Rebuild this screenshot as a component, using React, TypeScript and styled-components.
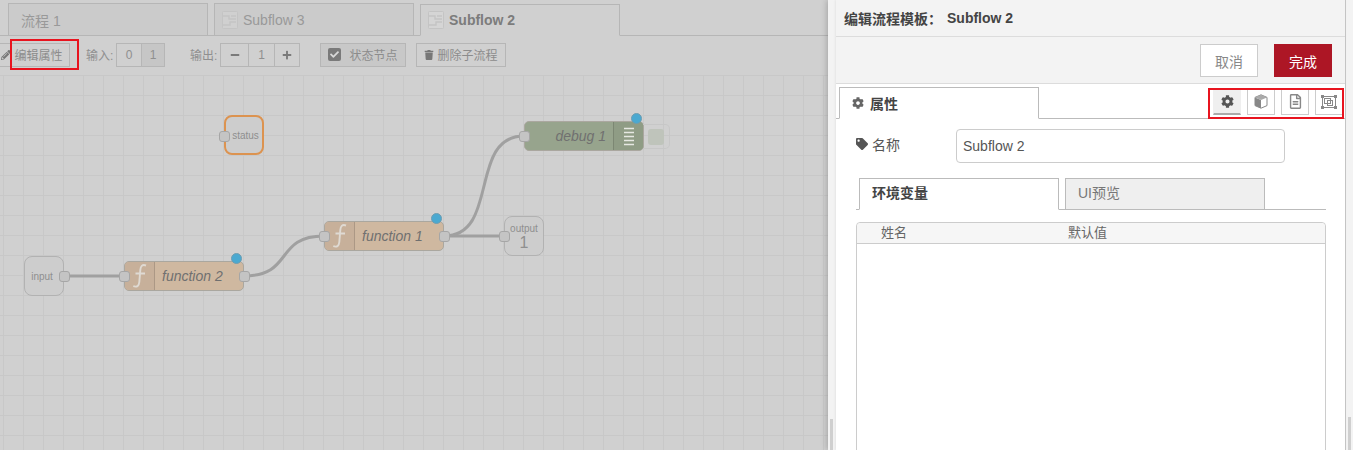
import styled, { createGlobalStyle } from "styled-components";
import { FaCog, FaMinus, FaPencilAlt, FaPlus, FaRegFileAlt, FaTag, FaTrash, FaCheck } from "react-icons/fa";

const FONT = `"Liberation Sans", "Noto Sans CJK SC", sans-serif`;

const GlobalStyle = createGlobalStyle`
  html, body {
    margin: 0;
    height: 450px;
    overflow: hidden;
    font-family: ${FONT};
  }
  * {
    box-sizing: border-box;
  }
`;

const Page = styled.div`
  display: flex;
  width: 1353px;
  height: 450px;
  overflow: hidden;
  position: relative;
`;

const Workspace = styled.div`
  width: 828px;
  flex: none;
  display: flex;
  flex-direction: column;
  background: #d0d0d0;
`;

const TabBar = styled.div`
  height: 36px;
  flex: none;
  display: flex;
  align-items: flex-end;
  gap: 6px;
  padding-left: 8px;
  border-bottom: 1px solid #b6b6b6;
`;

const Tab = styled.div<{ $active?: boolean }>`
  width: 200px;
  height: 32px;
  margin-bottom: ${(p) => (p.$active ? "-1px" : "0")};
  padding-left: 7px;
  display: flex;
  align-items: center;
  gap: 5px;
  font-size: 14px;
  font-weight: ${(p) => (p.$active ? 700 : 400)};
  color: ${(p) => (p.$active ? "#7c7c7c" : "#999")};
  background: ${(p) => (p.$active ? "#d0d0d0" : "#cbcbcb")};
  border: 1px solid #b6b6b6;
  border-bottom: ${(p) => (p.$active ? "1px solid #d0d0d0" : "none")};
`;

const TabName = styled.span<{ $plain?: boolean }>`
  margin-left: ${(p) => (p.$plain ? "5px" : "0")};
`;

const Toolbar = styled.div`
  height: 39px;
  flex: none;
  display: flex;
  align-items: center;
  padding-bottom: 2px;
  font-size: 12px;
  color: #8f8f8f;
`;

const ToolButton = styled.div<{ $ml: number; $width: number; $on?: boolean }>`
  margin-left: ${(p) => p.$ml}px;
  width: ${(p) => p.$width}px;
  height: 24px;
  flex: none;
  display: flex;
  align-items: center;
  justify-content: center;
  gap: 3px;
  border: 1px solid #b6b6b6;
  background: ${(p) => (p.$on ? "#c8c8c8" : "transparent")};
  color: #8c8c8c;
  font-size: 12px;
  white-space: nowrap;
`;

const ToolLabel = styled.span<{ $ml: number }>`
  margin-left: ${(p) => p.$ml}px;
  width: 30px;
  flex: none;
  white-space: nowrap;
`;

const Group = styled.div`
  display: flex;
  height: 24px;
  flex: none;
  border: 1px solid #b6b6b6;
`;

const GroupCell = styled.div<{ $w: number; $on?: boolean }>`
  width: ${(p) => p.$w}px;
  display: flex;
  align-items: center;
  justify-content: center;
  font-size: 12px;
  color: #8f8f8f;
  background: ${(p) => (p.$on ? "#c6c6c6" : "transparent")};
  & + & {
    border-left: 1px solid #b6b6b6;
  }
`;

const CheckMark = styled.span`
  width: 13px;
  height: 13px;
  margin-right: 5px;
  border-radius: 2px;
  background: #7a7a7a;
  color: #d8d8d8;
  display: flex;
  align-items: center;
  justify-content: center;
  font-size: 9px;
`;

const Canvas = styled.div`
  flex: 1;
  position: relative;
  background-color: #d0d0d0;
  background-image: linear-gradient(#c8c8c8 1px, transparent 1px),
    linear-gradient(90deg, #c8c8c8 1px, transparent 1px);
  background-size: 20px 20px;
  background-position: 3px 0;
`;

const Wires = styled.svg`
  position: absolute;
  left: 0;
  top: 0;
  width: 828px;
  height: 375px;
`;

const FlowNode = styled.div<{ $x: number; $y: number; $bg: string }>`
  position: absolute;
  left: ${(p) => p.$x}px;
  top: ${(p) => p.$y}px;
  width: 120px;
  height: 30px;
  display: flex;
  background: ${(p) => p.$bg};
  border: 1px solid #aaa79f;
  border-radius: 5px;
  color: #707070;
  font-size: 14px;
  font-style: italic;
`;

const NodeIcon = styled.div<{ $bg: string; $right?: boolean }>`
  width: 30px;
  flex: none;
  display: flex;
  align-items: center;
  justify-content: center;
  background: ${(p) => p.$bg};
  border-radius: ${(p) => (p.$right ? "0 4px 4px 0" : "4px 0 0 4px")};
  border-${(p) => (p.$right ? "left" : "right")}: 1px solid #00000022;
`;

const NodeLabel = styled.div<{ $align?: string }>`
  flex: 1;
  line-height: 28px;
  text-align: ${(p) => p.$align || "left"};
  padding: ${(p) => (p.$align === "right" ? "0 7px 0 0" : "0 0 0 7px")};
`;

const PortNode = styled.div<{ $x: number; $y: number; $border?: string; $shift?: number }>`
  position: absolute;
  left: ${(p) => p.$x}px;
  top: ${(p) => p.$y}px;
  width: 40px;
  height: 40px;
  display: flex;
  flex-direction: column;
  align-items: center;
  justify-content: center;
  padding-top: ${(p) => (p.$shift ? 1 : 0)}px;
  padding-left: ${(p) => (p.$shift && p.$shift > 0 ? p.$shift : 0)}px;
  padding-right: ${(p) => (p.$shift && p.$shift < 0 ? -p.$shift : 0)}px;
  background: #cdcdcd;
  border: ${(p) => p.$border || "1.5px solid #b2b2b2"};
  border-radius: 8px;
  color: #8f8f8f;
  font-size: 10px;
  line-height: 12px;
`;

const OutputNumber = styled.div`
  font-size: 16px;
  line-height: 15px;
`;

const Port = styled.div<{ $x: number; $y: number }>`
  position: absolute;
  left: ${(p) => p.$x - 0.5}px;
  top: ${(p) => p.$y - 0.5}px;
  width: 11px;
  height: 11px;
  background: #c4c4c4;
  border: 1px solid #a6a6a6;
  border-radius: 3px;
`;

const Dot = styled.div<{ $x: number; $y: number }>`
  position: absolute;
  left: ${(p) => p.$x}px;
  top: ${(p) => p.$y}px;
  width: 11px;
  height: 11px;
  background: #4aa9d1;
  border: 1px solid #6f9db0;
  border-radius: 50%;
`;

const DebugButton = styled.div`
  position: absolute;
  left: 643px;
  top: 49px;
  width: 27px;
  height: 25px;
  padding: 4px 0 0 5px;
  border: 1px solid #c7c7c7;
  border-left: none;
  border-radius: 0 5px 5px 0;
`;

const DebugFill = styled.div`
  width: 16px;
  height: 16px;
  background: #bfc4bb;
  border-radius: 3px;
`;

const Tray = styled.div`
  flex: 1;
  display: flex;
  background: #f3f3f3;
  box-shadow: -1px 0 6px rgba(0, 0, 0, 0.22);
  z-index: 1;
`;

const TrayEdge = styled.div<{ $width: number; $pad: number; $h: number }>`
  width: ${(p) => p.$width}px;
  flex: none;
  display: flex;
  align-items: flex-end;
  padding-left: ${(p) => p.$pad}px;
  &::before {
    content: "";
    width: 3px;
    height: ${(p) => p.$h}px;
    background: #cfcfcf;
  }
`;

const TrayMain = styled.div`
  width: 510px;
  flex: none;
  display: flex;
  flex-direction: column;
  background: #fff;
  border-right: 1px solid #c4c4c4;
  box-shadow: -1px 0 2px rgba(0, 0, 0, 0.06);
`;

const TrayHeader = styled.div`
  height: 37px;
  flex: none;
  display: flex;
  align-items: center;
  gap: 5px;
  padding: 0 0 1px 8px;
  font-size: 14px;
  font-weight: 700;
  color: #444;
  background: #f3f3f3;
  border-bottom: 1px solid #dcdcdc;
`;

const TrayActions = styled.div`
  height: 47px;
  flex: none;
  display: flex;
  justify-content: flex-end;
  align-items: flex-start;
  gap: 16px;
  padding: 7px 13px 0 0;
  background: #f3f3f3;
  border-bottom: 1px solid #dcdcdc;
`;

const ActionButton = styled.div<{ $primary?: boolean }>`
  width: 58px;
  height: 33px;
  display: flex;
  align-items: center;
  justify-content: center;
  font-size: 14px;
  color: ${(p) => (p.$primary ? "#fff" : "#888")};
  background: ${(p) => (p.$primary ? "#ad1625" : "#fff")};
  border: 1px solid ${(p) => (p.$primary ? "#ad1625" : "#ccc")};
`;

const SideTabs = styled.div`
  height: 35px;
  flex: none;
  display: flex;
  align-items: flex-end;
  padding-left: 3px;
  border-bottom: 1px solid #bbb;
`;

const SideTab = styled.div`
  width: 200px;
  height: 32px;
  margin-bottom: -1px;
  padding-left: 12px;
  display: flex;
  align-items: center;
  gap: 6px;
  font-size: 14px;
  font-weight: 700;
  color: #444;
  background: #fff;
  border: 1px solid #bbb;
  border-bottom: 1px solid #fff;
`;

const SideGear = styled.span`
  display: flex;
  color: #666;
  font-size: 12px;
`;

const SideIcons = styled.div`
  margin-left: auto;
  margin-bottom: 3px;
  margin-right: 2px;
  display: flex;
  gap: 6px;
`;

const SideIcon = styled.div<{ $active?: boolean }>`
  width: 28px;
  height: 27px;
  display: flex;
  align-items: center;
  justify-content: center;
  font-size: ${(p) => (p.$active ? "13px" : "15px")};
  color: ${(p) => (p.$active ? "#555" : "#888")};
  background: ${(p) => (p.$active ? "#efefef" : "#fff")};
  border: 1px solid #ccc;
  border-bottom: ${(p) => (p.$active ? "2px solid #aaa" : "1px solid #ccc")};
  border-color: ${(p) => (p.$active ? "transparent transparent #aaa" : "#ccc")};
`;

const Form = styled.div`
  flex: 1;
  padding: 10px 20px 0;
  min-height: 0;
`;

const NameRow = styled.div`
  display: flex;
  align-items: center;
  height: 34px;
`;

const NameLabel = styled.label`
  width: 100px;
  flex: none;
  display: flex;
  align-items: center;
  gap: 4px;
  margin-top: -5px;
  font-size: 14px;
  color: #555;
`;

const NameInput = styled.div`
  width: 329px;
  height: 34px;
  padding: 0 6px;
  line-height: 33px;
  font-size: 14px;
  color: #555;
  border: 1px solid #ccc;
  border-radius: 4px;
`;

const SubTabs = styled.div`
  margin-top: 15px;
  height: 32px;
  width: 470px;
  display: flex;
  gap: 6px;
  padding-left: 3px;
  border-bottom: 1px solid #bbb;
`;

const SubTab = styled.div<{ $active?: boolean }>`
  width: 200px;
  height: ${(p) => (p.$active ? "32px" : "31px")};
  padding-left: 12px;
  line-height: 28px;
  font-size: 14px;
  font-weight: ${(p) => (p.$active ? 700 : 400)};
  color: ${(p) => (p.$active ? "#444" : "#777")};
  background: ${(p) => (p.$active ? "#fff" : "#efefef")};
  border: 1px solid #bbb;
  border-bottom: ${(p) => (p.$active ? "1px solid #fff" : "none")};
`;

const Table = styled.div`
  margin-top: 12px;
  width: 470px;
  height: 300px;
  border: 1px solid #ccc;
  border-radius: 4px 4px 0 0;
`;

const TableHead = styled.div`
  height: 21px;
  display: flex;
  align-items: center;
  padding: 0 0 3px 24px;
  font-size: 13px;
  color: #666;
  background: #f6f6f6;
  border-bottom: 1px solid #ccc;
  border-radius: 4px 4px 0 0;
`;

const HeadCell = styled.div<{ $width: number }>`
  width: ${(p) => p.$width}px;
`;

const Highlight = styled.div<{ $x: number; $y: number; $w: number; $h: number }>`
  position: absolute;
  left: ${(p) => p.$x}px;
  top: ${(p) => p.$y}px;
  width: ${(p) => p.$w}px;
  height: ${(p) => p.$h}px;
  border: 2px solid #e8141f;
  pointer-events: none;
  z-index: 2;
`;

function SubflowIcon() {
  return (
    <svg width="16" height="20" viewBox="0 0 16 20" fill="none">
      <rect x="0.5" y="1.5" width="15" height="17" rx="1" fill="#ffffff1c" stroke="#c4c4c4" />
      <path d="M1 6h6v3h7M14 12H8v3H1M9 6h5" stroke="#c4c4c4" strokeWidth="1.4" />
    </svg>
  );
}

function FunctionIcon() {
  return (
    <svg width="18" height="26" viewBox="0 0 18 26" fill="none">
      <path d="M15 2.5C11 1 9.6 3.5 9.3 7l-1 12c-.3 3.5-2 5.5-6 4.2M4.5 10.5h9.5" stroke="#dfdad3" strokeWidth="1.9" />
    </svg>
  );
}

function DebugIcon() {
  return (
    <svg width="12" height="24" viewBox="0 0 12 24" fill="none">
      <path d="M1 4.5h10M1 8.5h10M1 12.5h10M1 16.5h10M1 20.5h10" stroke="#e6e8e2" strokeWidth="1.4" />
    </svg>
  );
}

function CubeIcon() {
  return (
    <svg width="14" height="15" viewBox="0 0 14 15">
      <path d="M7 .8 13 3.4v8.2L7 14.2 1 11.6V3.4z" fill="#fff" stroke="#888" />
      <path d="M1 3.4 7 6v8.2L1 11.6z" fill="#888" />
      <path d="M1 3.4 7 .8 13 3.4 7 6z" fill="#aaa" />
    </svg>
  );
}

function FrameIcon() {
  return (
    <svg width="16" height="14" viewBox="0 0 16 14" fill="none" stroke="#888">
      <rect x="1.5" y="1.5" width="13" height="11" />
      <rect x="3.5" y="3.5" width="6" height="5" />
      <rect x="6.5" y="5.5" width="5" height="5" />
      <g fill="#888" stroke="none">
        <rect width="3" height="3" />
        <rect x="13" width="3" height="3" />
        <rect y="11" width="3" height="3" />
        <rect x="13" y="11" width="3" height="3" />
      </g>
    </svg>
  );
}

export default function App() {
  return (
    <Page>
      <GlobalStyle />
      <Workspace>
        <TabBar>
          <Tab>
            <TabName $plain>流程 1</TabName>
          </Tab>
          <Tab>
            <SubflowIcon />
            <TabName>Subflow 3</TabName>
          </Tab>
          <Tab $active>
            <SubflowIcon />
            <TabName>Subflow 2</TabName>
          </Tab>
        </TabBar>
        <Toolbar>
          <ToolButton $ml={-6} $width={76}>
            <FaPencilAlt size={10} color="#777" />
            编辑属性
          </ToolButton>
          <ToolLabel $ml={16}>输入:</ToolLabel>
          <Group>
            <GroupCell $w={24}>0</GroupCell>
            <GroupCell $w={23} $on>
              1
            </GroupCell>
          </Group>
          <ToolLabel $ml={25}>输出:</ToolLabel>
          <Group>
            <GroupCell $w={27}>
              <FaMinus size={10} color="#7a7a7a" />
            </GroupCell>
            <GroupCell $w={26}>1</GroupCell>
            <GroupCell $w={25}>
              <FaPlus size={10} color="#7a7a7a" />
            </GroupCell>
          </Group>
          <ToolButton $ml={20} $width={86} $on>
            <CheckMark>
              <FaCheck />
            </CheckMark>
            状态节点
          </ToolButton>
          <ToolButton $ml={10} $width={90}>
            <FaTrash size={10} color="#777" />
            删除子流程
          </ToolButton>
        </Toolbar>
        <Canvas>
          <Wires viewBox="0 0 828 375" fill="none">
            <g stroke="#a0a0a0" strokeWidth="3">
              <path d="M64 201H124" />
              <path d="M244 201C294 201 274 161 324 161" />
              <path d="M444 161H504" />
              <path d="M444 161C500 161 468 61 524 61" />
            </g>
          </Wires>

          <PortNode $x={224} $y={40} $border="2px solid #dc9350" $shift={3}>
            status
          </PortNode>
          <Port $x={219} $y={56} />

          <FlowNode $x={524} $y={46} $bg="#97a48d">
            <NodeLabel $align="right">debug 1</NodeLabel>
            <NodeIcon $bg="#8f9c85" $right>
              <DebugIcon />
            </NodeIcon>
          </FlowNode>
          <DebugButton>
            <DebugFill />
          </DebugButton>
          <Port $x={519} $y={56} />
          <Dot $x={630.5} $y={37.5} />

          <FlowNode $x={324} $y={146} $bg="#cfb8a0">
            <NodeIcon $bg="#c7b09a">
              <FunctionIcon />
            </NodeIcon>
            <NodeLabel>function 1</NodeLabel>
          </FlowNode>
          <Port $x={319} $y={156} />
          <Port $x={439} $y={156} />
          <Dot $x={430.5} $y={137.5} />

          <PortNode $x={504} $y={141}>
            output
            <OutputNumber>1</OutputNumber>
          </PortNode>
          <Port $x={499} $y={156} />

          <PortNode $x={24} $y={181} $shift={-4}>
            input
          </PortNode>
          <Port $x={59} $y={196} />

          <FlowNode $x={124} $y={186} $bg="#cfb8a0">
            <NodeIcon $bg="#c7b09a">
              <FunctionIcon />
            </NodeIcon>
            <NodeLabel>function 2</NodeLabel>
          </FlowNode>
          <Port $x={119} $y={196} />
          <Port $x={239} $y={196} />
          <Dot $x={230.5} $y={177.5} />
        </Canvas>
      </Workspace>

      <Tray>
        <TrayEdge $width={8} $pad={2} $h={31} />
        <TrayMain>
          <TrayHeader>
            <span>编辑流程模板：</span>
            <span>Subflow 2</span>
          </TrayHeader>
          <TrayActions>
            <ActionButton>取消</ActionButton>
            <ActionButton $primary>完成</ActionButton>
          </TrayActions>
          <SideTabs>
            <SideTab>
              <SideGear>
                <FaCog />
              </SideGear>
              属性
            </SideTab>
            <SideIcons>
              <SideIcon $active>
                <FaCog />
              </SideIcon>
              <SideIcon>
                <CubeIcon />
              </SideIcon>
              <SideIcon>
                <FaRegFileAlt />
              </SideIcon>
              <SideIcon>
                <FrameIcon />
              </SideIcon>
            </SideIcons>
          </SideTabs>
          <Form>
            <NameRow>
              <NameLabel>
                <FaTag size={12} />
                名称
              </NameLabel>
              <NameInput>Subflow 2</NameInput>
            </NameRow>
            <SubTabs>
              <SubTab $active>环境变量</SubTab>
              <SubTab>UI预览</SubTab>
            </SubTabs>
            <Table>
              <TableHead>
                <HeadCell $width={187}>姓名</HeadCell>
                <HeadCell $width={100}>默认值</HeadCell>
              </TableHead>
            </Table>
          </Form>
        </TrayMain>
        <TrayEdge $width={7} $pad={2} $h={33} />
      </Tray>

      <Highlight $x={10} $y={39} $w={69} $h={31} />
      <Highlight $x={1208} $y={88} $w={136} $h={31} />
    </Page>
  );
}
